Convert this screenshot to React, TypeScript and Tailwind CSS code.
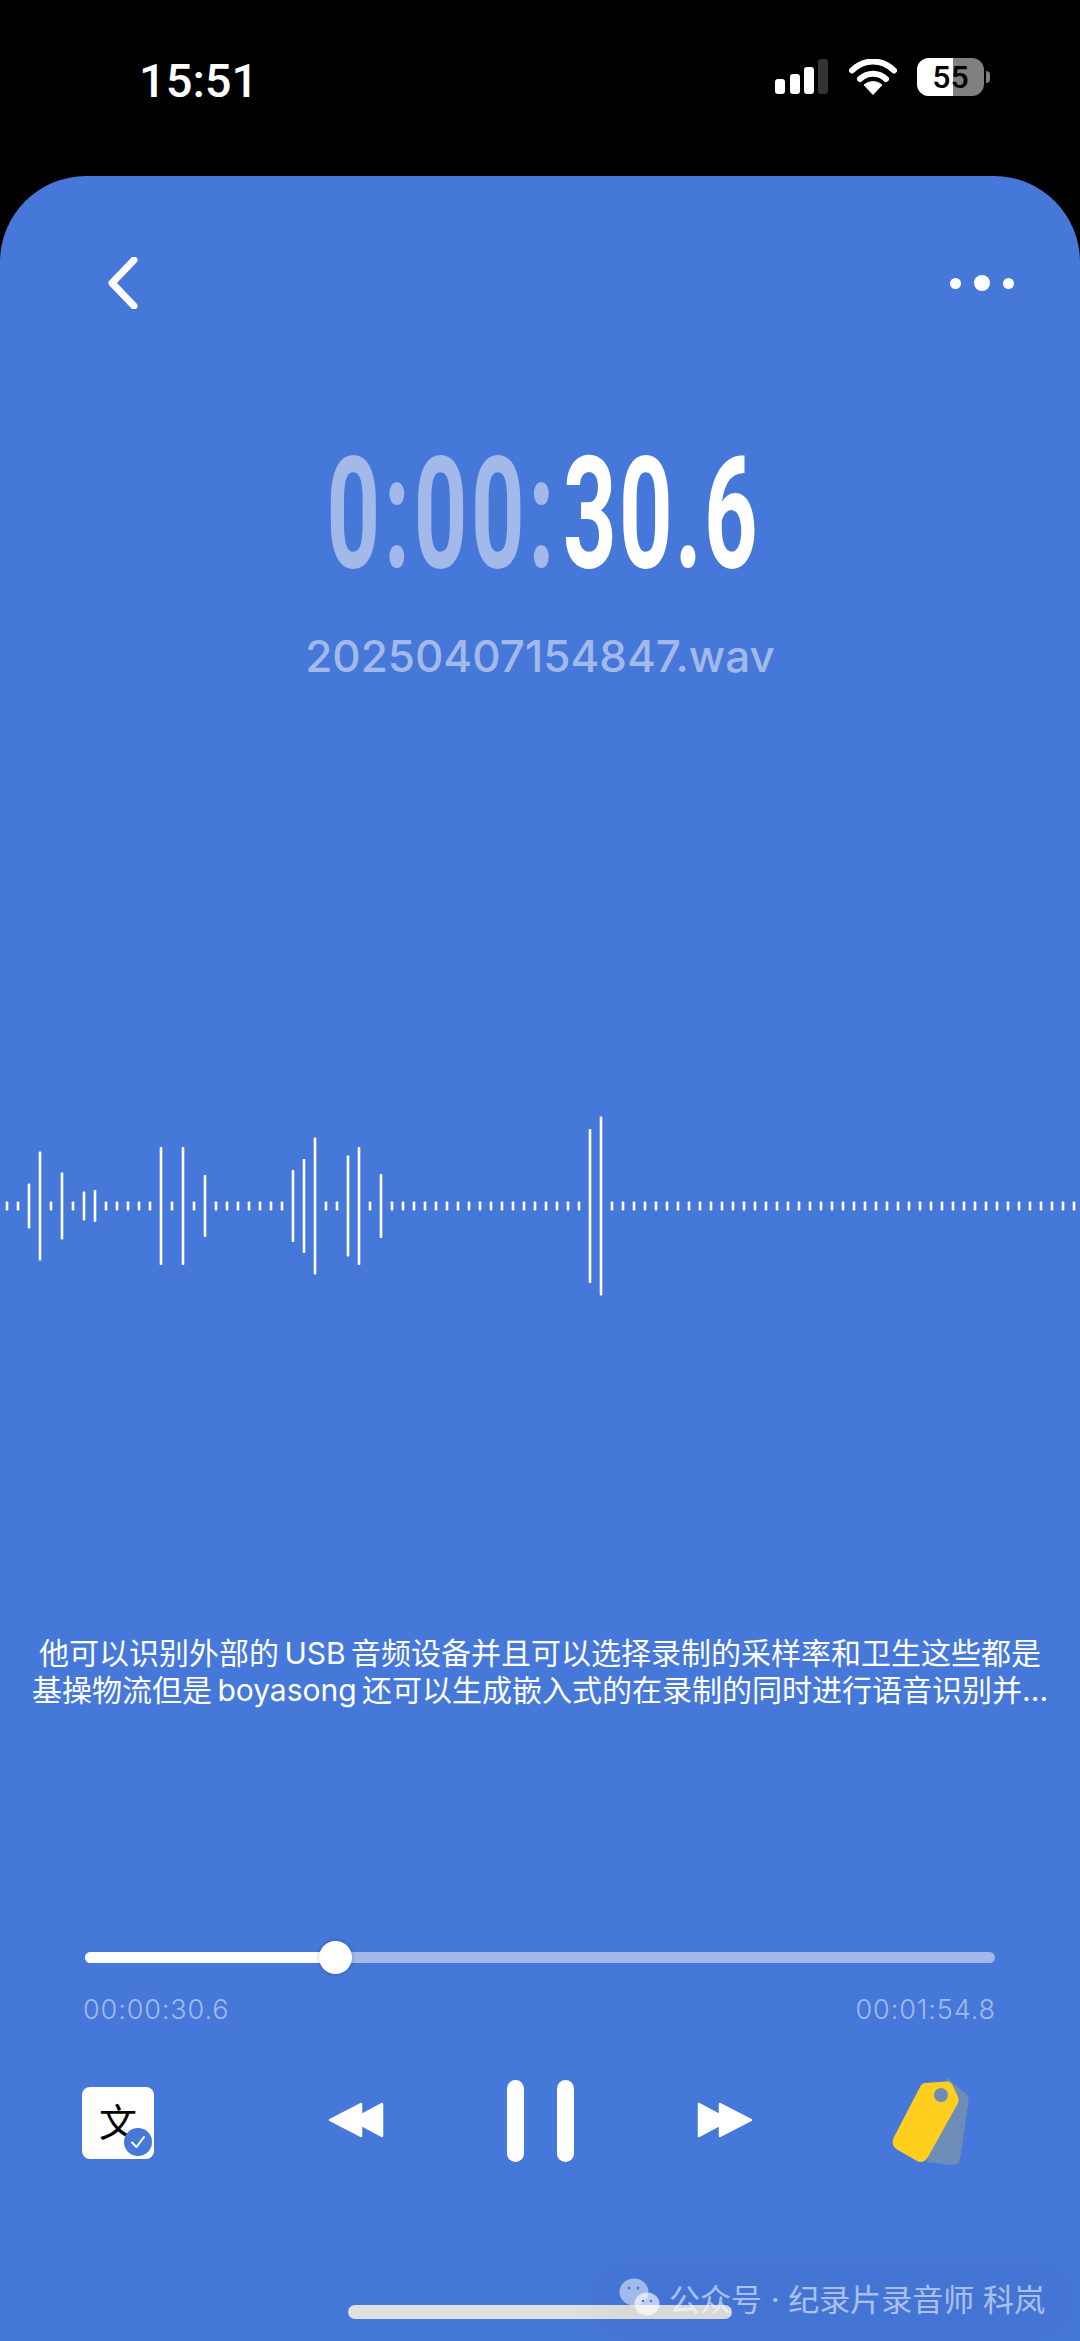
const SANS = "font-['Inter','Noto_Sans_CJK_SC',sans-serif]";

// tall bars of the wave form, keyed by x position; everything else is a 9px tick
const TALL_BARS: Record<number, number> = {
  29: 45, 40: 109, 62: 67, 84: 29, 95: 32, 161: 118, 183: 118, 205: 62,
  293: 72, 304: 94, 315: 137, 348: 101, 359: 118, 381: 64, 590: 154, 601: 179,
};
const BAR_XS = Array.from({ length: 98 }, (_, i) => 7 + i * 11);

function StatusBar() {
  return (
    <div className="h-[176px] shrink-0 flex items-start justify-between pl-[139px] pr-[90px] pt-[56px] text-white">
      <span className="font-['Roboto',sans-serif] font-medium text-[47px] leading-[50px]">15:51</span>
      <div className="flex items-center gap-[20px] pt-[2px]">
        <svg width="54" height="36" viewBox="0 0 54 36">
          <rect x="0" y="20" width="10" height="15" rx="3" fill="#fff" />
          <rect x="15" y="15" width="10" height="20" rx="3" fill="#fff" />
          <rect x="29" y="8" width="10" height="27" rx="3" fill="#fff" />
          <rect x="43" y="0" width="10" height="35" rx="3" fill="#333" />
        </svg>
        <svg width="48" height="36" viewBox="0 0 48 36">
          <path d="M3 11.500C15 -0.500 33 -0.500 45 11.500" fill="none" stroke="#fff" strokeWidth="6" strokeLinecap="round" />
          <path d="M11 20C18.500 13 29.500 13 37 20" fill="none" stroke="#fff" strokeWidth="6" strokeLinecap="round" />
          <path d="M24 35.500L15 26C20 21.500 28 21.500 33 26Z" fill="#fff" stroke="#fff" strokeWidth="1" strokeLinejoin="round" />
        </svg>
        <div className="flex items-center gap-[2px]">
          <div className="relative w-[67px] h-[38px] rounded-[12px] overflow-hidden bg-[#808080] flex items-center justify-center">
            <div className="absolute inset-y-0 left-0 w-[36px] bg-white" />
            <span className="relative font-['Roboto',sans-serif] font-medium text-[32px] leading-[38px] text-black">55</span>
          </div>
          <div className="w-[4px] h-[12px] rounded-r-full bg-[#808080]" />
        </div>
      </div>
    </div>
  );
}

function Waveform() {
  return (
    <svg width="1080" height="190" viewBox="0 0 1080 190" className="block">
      {BAR_XS.map((x) => {
        const h = TALL_BARS[x] ?? 9;
        return <rect key={x} x={x - 1.3} y={95 - h / 2} width="2.6" height={h} rx="0.8" fill="#fff" />;
      })}
    </svg>
  );
}

function Rewind({ flip }: { flip?: boolean }) {
  return (
    <svg width="56" height="36" viewBox="0 0 56 36" className={flip ? "-scale-x-100" : ""}>
      <path d="M2 18L33 2V34Z" fill="#fff" stroke="#fff" strokeWidth="2.500" strokeLinejoin="round" />
      <path d="M24 18L54 2V34Z" fill="#fff" stroke="#fff" strokeWidth="2.500" strokeLinejoin="round" />
    </svg>
  );
}

function TagIcon() {
  return (
    <svg width="90" height="94" viewBox="0 0 90 94">
      <path d="M60 4L79 20Q82 23 81.500 27L73.500 83Q72.500 92 64 91L40 88Z" fill="#6d8cb8" />
      <path
        d="M38 9L59 7.500Q63 7 65 10L71 23Q72.500 26 71 29L41 83Q37 90 30 87L10 75.500Q3 71 7 63L33 13Q35 9 38 9Z"
        fill="#ffce1f"
      />
      <circle cx="54" cy="21" r="7" fill="#6d8cb8" />
    </svg>
  );
}

function Watermark() {
  return (
    <div className="absolute left-[619px] top-[2280px] flex items-center gap-[8px] text-white/55">
      <div className="absolute -inset-x-[20px] -inset-y-[14px] bg-black/[0.03] blur-lg" />
      <svg width="42" height="42" viewBox="0 0 42 42" className="relative -mt-[2px]">
        <ellipse cx="15" cy="14" rx="14.500" ry="13.500" fill="#fff" fillOpacity="0.5" />
        <ellipse cx="28" cy="26" rx="12.500" ry="11.500" fill="#fff" fillOpacity="0.65" />
        <circle cx="10" cy="10" r="1.500" fill="#4678da" />
        <circle cx="19" cy="10" r="1.500" fill="#4678da" />
        <circle cx="24" cy="23" r="1.300" fill="#4678da" />
        <circle cx="32" cy="23" r="1.300" fill="#4678da" />
      </svg>
      <span className={`${SANS} relative text-[31px] leading-[36px] whitespace-nowrap`}>公众号 · 纪录片录音师 科岚</span>
    </div>
  );
}

export default function App() {
  return (
    <div className={`${SANS} relative w-[1080px] h-[2341px] bg-black flex flex-col overflow-hidden`}>
      <StatusBar />
      <div className="flex-1 bg-[#4678da] rounded-t-[86px] flex flex-col">
        <div className="flex items-center justify-between h-[52px] mt-[81px] pl-[107px] pr-[66px]">
          <svg width="32" height="52" viewBox="0 0 32 52">
            <path d="M27 3L5 26L27 49" fill="none" stroke="#fff" strokeWidth="7" strokeLinecap="round" strokeLinejoin="round" />
          </svg>
          <div className="flex items-center gap-[13px]">
            <div className="w-[11px] h-[11px] rounded-full bg-white" />
            <div className="w-[16px] h-[16px] rounded-full bg-white" />
            <div className="w-[11px] h-[11px] rounded-full bg-white" />
          </div>
        </div>

        <div className="mt-[127px] h-[156px] flex justify-center pl-[6px]">
          <div className="font-['Roboto',sans-serif] font-bold text-[156px] leading-[156px] tracking-[6px] whitespace-nowrap scale-x-[0.6]">
            <span className="text-[#a3b9ea]">0:00:</span>
            <span className="ml-[8px] tracking-[3.500px] text-white">30.6</span>
          </div>
        </div>
        <div className="mt-[38px] text-center text-[44px] font-medium leading-[52px] text-[#a3b9ea]">20250407154847.wav</div>

        <div className="mt-[429px]">
          <Waveform />
        </div>

        <div className="mt-[334px] text-center text-white text-[30px] leading-[37px] whitespace-nowrap">
          <div>他可以识别外部的&#8201;USB&#8201;音频设备并且可以选择录制的采样率和卫生这些都是</div>
          <div>基操物流但是&#8201;boyasong&#8201;还可以生成嵌入式的在录制的同时进行语音识别并...</div>
        </div>

        <div className="mt-[243px] mx-[85px] h-[11px] rounded-full bg-[#a3b9ea] flex items-center">
          <div className="w-[250px] h-full rounded-full bg-white" />
          <div className="w-[33px] h-[33px] -ml-[16px] rounded-full bg-white shadow-[0_0_4px_rgba(0,0,0,0.25)]" />
        </div>
        <div className="mt-[31px] ml-[83px] mr-[84px] flex justify-between text-[27px] leading-[32px] font-light tracking-[0.9px] text-[#a3b9ea]">
          <span>00:00:30.6</span>
          <span>00:01:54.8</span>
        </div>

        <div className="mt-[54px] ml-[82px] flex items-center h-[82px]">
          <div className="relative w-[72px] h-[72px] mt-[4px] rounded-[8px] bg-white flex items-center justify-center">
            <span className="text-[38px] leading-none text-black -mt-[2px]">文</span>
            <div className="absolute left-[42px] top-[41px] w-[28px] h-[28px] rounded-full bg-[#4678da] flex items-center justify-center">
              <svg width="18" height="18" viewBox="0 0 18 18">
                <path d="M3 9.500L7.500 14L15 4" fill="none" stroke="#fff" strokeWidth="2" strokeLinecap="round" strokeLinejoin="round" />
              </svg>
            </div>
          </div>
          <div className="ml-[174px] -mt-[2px]">
            <Rewind />
          </div>
          <div className="ml-[123px] flex gap-[33px]">
            <div className="w-[17px] h-[82px] rounded-full bg-white" />
            <div className="w-[17px] h-[82px] rounded-full bg-white" />
          </div>
          <div className="ml-[123px] -mt-[2px]">
            <Rewind flip />
          </div>
          <div className="ml-[134px]">
            <TagIcon />
          </div>
        </div>
      </div>

      <div className="absolute left-[348px] top-[2305px] w-[384px] h-[14px] rounded-full bg-[#e0e0e0]" />
      <Watermark />
    </div>
  );
}
